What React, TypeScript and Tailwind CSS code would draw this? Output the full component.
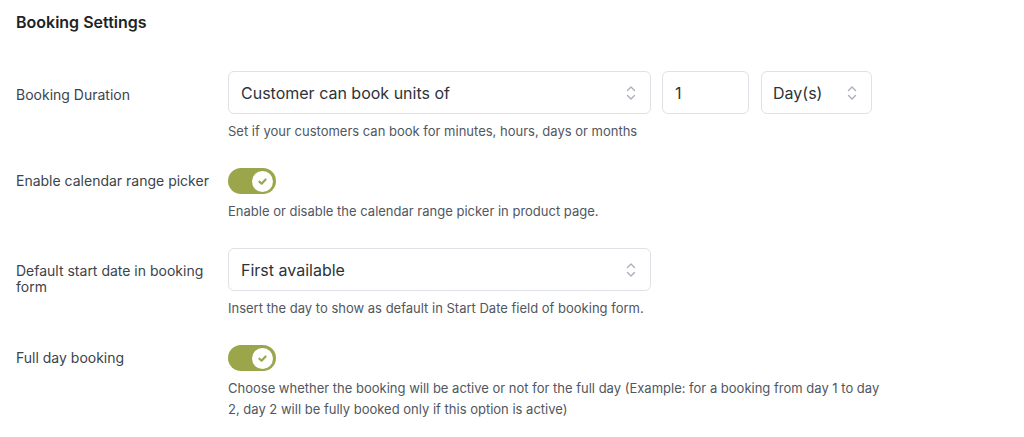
import React from "react";

function Chevrons() {
  return (
    <svg width="10" height="16" viewBox="0 0 10 16" fill="none" stroke="#a7b0bd" strokeWidth="1.4" strokeLinecap="round" strokeLinejoin="round">
      <path d="M1.5 5.5 L5 2 L8.5 5.5" />
      <path d="M1.5 10.5 L5 14 L8.5 10.5" />
    </svg>
  );
}

function Select({ text, className }: { text: string; className: string }) {
  return (
    <div className={`h-[43px] flex items-center justify-between pl-3 pr-[14px] border border-[#dfe1e6] rounded-[6px] bg-white text-[16px] text-[#2c3338] ${className}`}>
      <span>{text}</span>
      <Chevrons />
    </div>
  );
}

function Toggle() {
  return (
    <div className="w-[48px] h-[26px] rounded-full bg-[#9ba64b] flex items-center justify-end pr-[3px]">
      <div className="w-[21px] h-[21px] rounded-full bg-white flex items-center justify-center">
        <svg width="11" height="11" viewBox="0 0 10 10" fill="none" stroke="#9ba64b" strokeWidth="2" strokeLinecap="round" strokeLinejoin="round">
          <path d="M2.2 5.2 L4.2 7 L7.8 3.2" />
        </svg>
      </div>
    </div>
  );
}

function Desc({ children }: { children: React.ReactNode }) {
  return <p className="mt-[7px] text-[13px] leading-[21px] text-[#50575e] max-w-[666px]">{children}</p>;
}

export default function App() {
  return (
    <div className="w-[1024px] h-[437px] bg-white px-4 pt-[12px]" style={{ fontFamily: "Inter, 'Noto Sans', sans-serif" }}>
      <h2 className="text-[16px] leading-[21px] font-semibold text-[#1d2327]">Booking Settings</h2>
      <div className="mt-[38px] flex flex-col gap-[26px]">
        <div className="flex gap-4">
          <div className="w-[196px] pt-[16px] text-[14px] leading-[16px] text-[#3c434a]">Booking Duration</div>
          <div className="flex flex-col">
            <div className="flex gap-[11px]">
              <Select text="Customer can book units of" className="w-[423px]" />
              <div className="w-[87px] h-[43px] flex items-center pl-3 border border-[#dfe1e6] rounded-[6px] text-[16px] text-[#2c3338]">1</div>
              <Select text="Day(s)" className="w-[111px] ml-[1px] pl-[11px]" />
            </div>
            <Desc>Set if your customers can book for minutes, hours, days or months</Desc>
          </div>
        </div>
        <div className="flex gap-4">
          <div className="w-[196px] pt-[5px] text-[14px] leading-[16px] text-[#3c434a]">Enable calendar range picker</div>
          <div className="flex flex-col">
            <Toggle />
            <Desc>Enable or disable the calendar range picker in product page.</Desc>
          </div>
        </div>
        <div className="flex gap-4">
          <div className="w-[196px] pt-[15px] text-[14px] leading-[16px] text-[#3c434a]">Default start date in booking form</div>
          <div className="flex flex-col">
            <Select text="First available" className="w-[423px]" />
            <Desc>Insert the day to show as default in Start Date field of booking form.</Desc>
          </div>
        </div>
        <div className="flex gap-4">
          <div className="w-[196px] pt-[5px] text-[14px] leading-[16px] text-[#3c434a]">Full day booking</div>
          <div className="flex flex-col">
            <Toggle />
            <Desc>Choose whether the booking will be active or not for the full day (Example: for a booking from day 1 to day 2, day 2 will be fully booked only if this option is active)</Desc>
          </div>
        </div>
      </div>
    </div>
  );
}
